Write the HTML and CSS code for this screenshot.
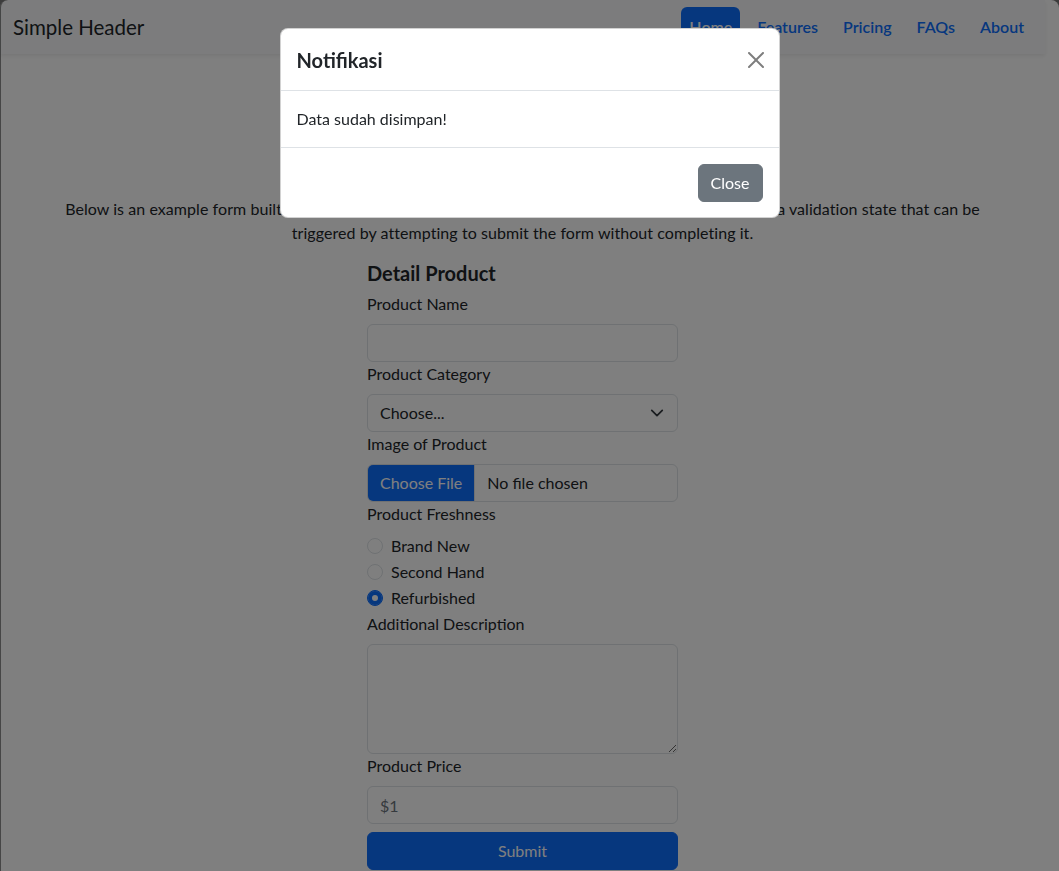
FILE: index.html
```html
<!DOCTYPE html>
<html lang="en">
<head>
<meta charset="utf-8">
<title>Simple Header</title>
<link rel="stylesheet" href="styles.css">
</head>
<body>
<header class="site-header">
  <span class="brand">Simple Header</span>
  <ul class="nav">
    <li><a class="nav-link active" href="#">Home</a></li>
    <li><a class="nav-link" href="#">Features</a></li>
    <li><a class="nav-link" href="#">Pricing</a></li>
    <li><a class="nav-link" href="#">FAQs</a></li>
    <li><a class="nav-link" href="#">About</a></li>
  </ul>
</header>

<main class="container">
  <div class="intro">
    <p>Below is an example form built entirely with Bootstrap's form controls. Each required form group has a validation state that can be<br>triggered by attempting to submit the form without completing it.</p>
  </div>

  <form class="product-form">
    <h4 class="form-title">Detail Product</h4>

    <label class="form-label" for="pname">Product Name</label>
    <input class="form-control" id="pname" type="text">

    <label class="form-label" for="pcat">Product Category</label>
    <div class="select-wrap">
      <select class="form-control form-select" id="pcat">
        <option>Choose...</option>
      </select>
      <svg class="chevron" viewBox="0 0 16 16" width="16" height="16" aria-hidden="true"><path d="m2 5 6 6 6-6" fill="none" stroke="#343a40" stroke-width="2" stroke-linecap="round" stroke-linejoin="round"/></svg>
    </div>

    <label class="form-label" for="pimg">Image of Product</label>
    <input class="form-control file-input" id="pimg" type="file">

    <label class="form-label">Product Freshness</label>
    <div class="form-check">
      <input class="check-input" type="radio" name="fresh" id="f1">
      <label for="f1">Brand New</label>
    </div>
    <div class="form-check">
      <input class="check-input" type="radio" name="fresh" id="f2">
      <label for="f2">Second Hand</label>
    </div>
    <div class="form-check">
      <input class="check-input" type="radio" name="fresh" id="f3" checked>
      <label for="f3">Refurbished</label>
    </div>

    <label class="form-label" for="pdesc">Additional Description</label>
    <textarea class="form-control form-textarea" id="pdesc"></textarea>

    <label class="form-label" for="pprice">Product Price</label>
    <input class="form-control" id="pprice" type="text" placeholder="$1">

    <button class="btn-submit" type="button">Submit</button>
  </form>
</main>

<div class="backdrop"></div>

<div class="modal-layer">
  <div class="modal-dialog">
    <div class="modal-header">
      <h1 class="modal-title">Notifikasi</h1>
      <button class="btn-close" type="button" aria-label="Close">
        <svg viewBox="0 0 16 16" width="16" height="16" aria-hidden="true"><path d="M.293.293a1 1 0 0 1 1.414 0L8 6.586 14.293.293a1 1 0 1 1 1.414 1.414L9.414 8l6.293 6.293a1 1 0 0 1-1.414 1.414L8 9.414l-6.293 6.293a1 1 0 0 1-1.414-1.414L6.586 8 .293 1.707a1 1 0 0 1 0-1.414z"/></svg>
      </button>
    </div>
    <div class="modal-body">Data sudah disimpan!</div>
    <div class="modal-footer">
      <button class="btn-secondary" type="button">Close</button>
    </div>
  </div>
</div>

<div class="window-frame"></div>
</body>
</html>
```

FILE: styles.css
```css
html, body {
  margin: 0;
}

body {
  font-family: Lato, "Noto Sans", sans-serif;
  font-size: 16px;
  line-height: 1.5;
  color: #212529;
  background: #fff;
  padding-right: 14px;
}

/* header */
.site-header {
  display: flex;
  align-items: center;
  justify-content: space-between;
  padding: 7px 13px 7px 13px;
  background: #f8f9fa;
  box-shadow: 0 2px 4px rgba(0, 0, 0, 0.075);
}

.brand {
  font-size: 20.5px;
  line-height: 40px;
}

.nav {
  display: flex;
  gap: 9px;
  list-style: none;
  margin: 0;
  padding: 0;
}

.nav-link {
  display: block;
  padding: 8px 8px;
  color: #0d6efd;
  font-weight: 600;
  text-decoration: none;
  border-radius: 6px;
}

.nav-link.active {
  background: #0d6efd;
  color: #fff;
}

/* content */
.container {
  max-width: 936px;
  margin: 0 auto;
}

.intro {
  padding-top: 143px;
  text-align: center;
  letter-spacing: 0.06px;
}

.intro p {
  margin: 0 0 16px;
}

.product-form {
  width: 311px;
  margin: 0 auto;
}

.form-title {
  font-size: 20px;
  line-height: 24px;
  font-weight: 700;
  margin: 0 0 7px;
}

.form-label {
  display: block;
  margin-bottom: 8px;
}

.form-control {
  display: block;
  box-sizing: border-box;
  width: 100%;
  height: 38px;
  margin: 0;
  padding: 6px 12px;
  font: inherit;
  color: #212529;
  background: #fff;
  border: 1px solid #dee2e6;
  border-radius: 6px;
}

.form-control::placeholder {
  color: #6c757d;
}

.select-wrap {
  position: relative;
}

.form-select {
  appearance: none;
  -webkit-appearance: none;
  padding-right: 36px;
}

.chevron {
  position: absolute;
  right: 14px;
  top: 12px;
  width: 14px;
  height: 14px;
  pointer-events: none;
}

.file-input {
  padding: 6px 12px;
  overflow: hidden;
}

.file-input::file-selector-button {
  margin: -6px 12px -6px -12px;
  padding: 6px 12px;
  height: 36px;
  font: inherit;
  color: #fff;
  background: #0d6efd;
  border: 0;
  border-right: 1px solid #dee2e6;
  border-radius: 0;
}

.form-check {
  display: flex;
  align-items: center;
  gap: 8px;
  min-height: 24px;
  margin-bottom: 2px;
}

.check-input {
  appearance: none;
  -webkit-appearance: none;
  width: 16px;
  height: 16px;
  margin: 0;
  border: 1px solid #dee2e6;
  border-radius: 50%;
  background: #fff;
  box-sizing: border-box;
}

.check-input:checked {
  background: #0d6efd;
  border-color: #0d6efd;
  box-shadow: inset 0 0 0 4px #0d6efd, inset 0 0 0 8px #fff;
}

.form-textarea {
  height: 110px;
  resize: vertical;
}

.btn-submit {
  display: block;
  box-sizing: border-box;
  width: 100%;
  height: 38px;
  margin-top: 8px;
  padding: 6px 12px;
  font: inherit;
  color: #fff;
  background: #0d6efd;
  border: 1px solid #0d6efd;
  border-radius: 6px;
}

/* modal */
.backdrop {
  position: fixed;
  inset: 0;
  background: rgba(0, 0, 0, 0.5);
}

.modal-layer {
  position: fixed;
  inset: 0;
  display: flex;
  justify-content: center;
  align-items: flex-start;
  padding-top: 28px;
}

.modal-dialog {
  width: 500px;
  box-sizing: border-box;
  background: #fff;
  border: 1px solid rgba(0, 0, 0, 0.175);
  border-radius: 8px;
}

.modal-header {
  display: flex;
  align-items: center;
  justify-content: space-between;
  padding: 16px 15px 15px 16px;
  border-bottom: 1px solid #dee2e6;
}

.modal-title {
  margin: 0;
  font-size: 20px;
  line-height: 30px;
  font-weight: 700;
}

.btn-close {
  display: flex;
  padding: 0;
  width: 16px;
  height: 16px;
  border: 0;
  background: none;
  opacity: 0.5;
}

.modal-body {
  padding: 16px;
}

.modal-footer {
  display: flex;
  justify-content: flex-end;
  padding: 12px 12px 11px;
  border-top: 1px solid #dee2e6;
}

.btn-secondary {
  margin: 4px;
  padding: 6px 12px;
  font: inherit;
  color: #fff;
  background: #6c757d;
  border: 1px solid #6c757d;
  border-radius: 6px;
}

/* rounded window edge */
.window-frame {
  position: fixed;
  inset: 0;
  border-left: 1px solid rgba(0, 0, 0, 0.45);
  border-radius: 8px 8px 0 0;
  box-shadow: 0 0 0 20px #3c3c3c;
  pointer-events: none;
}
```
